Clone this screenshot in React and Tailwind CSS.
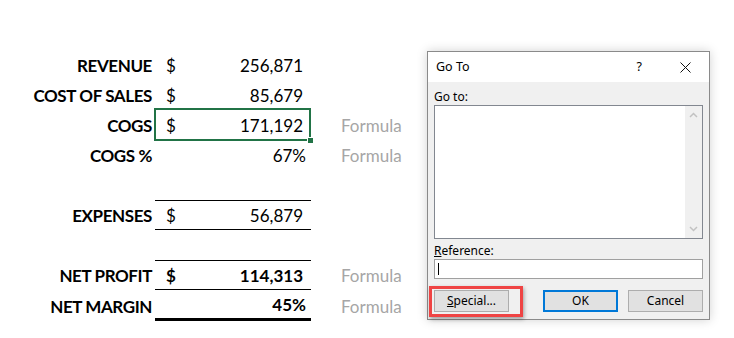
import React from "react";

/* =========================
   SHEET DATA
   ========================= */

const ROWS = [
  { label: "REVENUE", dollar: true, value: "256,871" },
  { label: "COST OF SALES", dollar: true, value: "85,679" },
  { label: "COGS", dollar: true, value: "171,192", formula: true, selected: true },
  { label: "COGS %", value: "67%", formula: true, pct: true },
  { blank: true },
  { label: "EXPENSES", dollar: true, value: "56,879", top: true, bottom: true },
  { blank: true },
  { label: "NET PROFIT", dollar: true, value: "114,313", formula: true, bold: true, top: true, bottom: true },
  { label: "NET MARGIN", value: "45%", formula: true, bold: true, pct: true, thick: true }
];

const SheetRow = ({ row }) => {
  if (row.blank) return <div className="h-[30px]" />;

  const borders = [
    row.top ? "border-t border-black" : "",
    row.bottom ? "border-b border-black" : "",
    row.thick ? "border-b-[3px] border-black" : ""
  ].join(" ");

  return (
    <div className={`flex ${row.thick ? "h-[31px]" : "h-[30px]"}`}>
      <div className="w-[155px] pr-[3px] pt-[2px] flex items-center justify-end font-bold tracking-[-0.4px] text-black">
        {row.label}
      </div>

      <div className={`relative w-[156px] pt-[2px] pl-[11px] flex items-center justify-between ${row.pct ? "pr-[5px]" : "pr-[8px]"} ${row.bold ? "font-bold" : ""} ${borders}`}>
        <span>{row.dollar ? "$" : ""}</span>
        <span>{row.value}</span>

        {row.selected && (
          <>
            <div className="absolute -left-px -top-[2px] right-0 -bottom-px border-2 border-[#217346]" />
            <div className="absolute -right-[2px] -bottom-[3px] w-[5px] h-[5px] bg-[#217346] outline outline-1 outline-white" />
          </>
        )}
      </div>

      <div className="pl-[30px] pt-[2px] flex items-center text-[#a6a6a6]">
        {row.formula ? "Formula" : ""}
      </div>
    </div>
  );
};

/* =========================
   GO TO DIALOG
   ========================= */

const Chevron = ({ up }) => (
  <svg width="9" height="6" viewBox="0 0 9 6">
    <path
      d={up ? "M1 5 L4.5 1.5 L8 5" : "M1 1 L4.5 4.5 L8 1"}
      fill="none"
      stroke="#c2c2c2"
      strokeWidth="1.5"
    />
  </svg>
);

const DialogButton = ({ children, primary }) => (
  <button
    className={`w-[75px] h-[22px] bg-[#e1e1e1] flex items-center justify-center text-black ${
      primary ? "border-2 border-[#0078d7]" : "border border-[#adadad]"
    }`}
  >
    {children}
  </button>
);

const GoToDialog = () => (
  <div className="absolute left-[427px] top-[51px] w-[283px] h-[269px] bg-[#f0f0f0] border border-[#8a8a8a] shadow-[0_0_10px_rgba(0,0,0,0.18)] flex flex-col text-[12px] font-['Noto_Sans',sans-serif]">
    {/* title bar */}
    <div className="h-[30px] bg-white flex items-center pl-[8px] pr-[18px]">
      <span className="flex-1 text-[12.5px]">Go To</span>
      <span className="mr-[38px] text-[12.5px]">?</span>
      <svg width="11" height="11" viewBox="0 0 11 11">
        <path d="M0.5 0.5 L10.5 10.5 M10.5 0.5 L0.5 10.5" stroke="#111" strokeWidth="1" />
      </svg>
    </div>

    <div className="flex-1 flex flex-col px-[6px]">
      <div className="h-[23px] flex items-center pt-[6px]">Go to:</div>

      <div className="h-[134px] bg-white border border-[#828790] flex justify-end">
        <div className="w-[17px] bg-[#f0f0f0] flex flex-col items-center justify-between py-[6px]">
          <Chevron up />
          <Chevron />
        </div>
      </div>

      <div className="h-[20px] flex items-center pt-[3px]">
        <span><span className="underline">R</span>eference:</span>
      </div>

      <div className="h-[20px] bg-white border border-[#a0a0a0] flex items-center pl-[3px]">
        <div className="w-px h-[12px] bg-black" />
      </div>

      <div className="flex items-center mt-[11px]">
        <DialogButton>
          <span><span className="underline">S</span>pecial...</span>
        </DialogButton>
        <div className="flex-1" />
        <DialogButton primary>OK</DialogButton>
        <div className="w-[10px]" />
        <DialogButton>Cancel</DialogButton>
      </div>
    </div>
  </div>
);

/* =========================
   MAIN PAGE
   ========================= */

export default function App() {
  return (
    <div className="relative w-[734px] h-[338px] bg-white overflow-hidden text-[17px] text-black font-['Lato',sans-serif]">
      <div className="pt-[50px]">
        {ROWS.map((row, i) => (
          <SheetRow key={i} row={row} />
        ))}
      </div>

      <GoToDialog />

      {/* red highlight around Special... */}
      <div className="absolute left-[429px] top-[286px] w-[94px] h-[31px] border-[3px] border-[#ef4444] shadow-[1px_2px_4px_rgba(0,0,0,0.35)]" />
    </div>
  );
}
